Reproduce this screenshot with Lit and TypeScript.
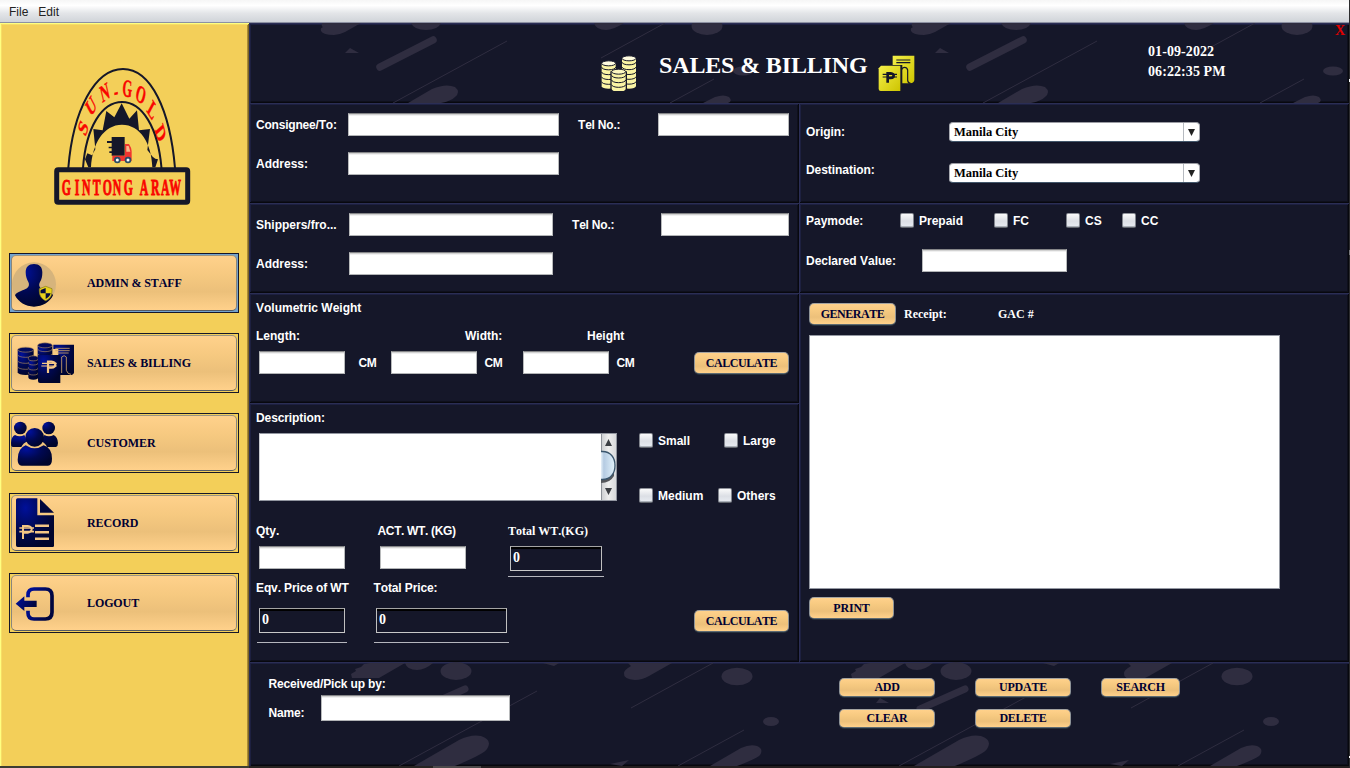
import { LitElement, html, css, svg } from "lit";
import { customElement } from "lit/decorators.js";

/* A pile of coins: one cylinder, a curved seam under every coin, and the top face. */
const stack = (x: number, y: number, rx: number, count: number, step: number, seam: string, face: string) => svg`
  <path d="M${x - rx} ${y}v${count * step - 4}a${rx} 8 0 0 0 ${rx * 2} 0v-${count * step - 4}z"/>
  ${Array.from({ length: count - 1 }, (_, i) => svg`
    <path fill="none" stroke=${seam} d="M${x - rx} ${y + (i + 1) * step - 3}a${rx} 8 0 0 0 ${rx * 2} 0"/>`)}
  <ellipse cx=${x} cy=${y} rx=${rx} ry="7.500" fill=${face} stroke=${seam}/>`;

const navGradient = svg`
  <defs>
    <radialGradient id="ink" cx="0.25" cy="0.2" r="0.85">
      <stop offset="0" stop-color="#00109a"/>
      <stop offset="0.55" stop-color="#000850"/>
      <stop offset="1" stop-color="#00052c"/>
    </radialGradient>
    <linearGradient id="inkLine" x1="0" y1="0" x2="1" y2="0.4">
      <stop offset="0" stop-color="#0010a0"/>
      <stop offset="1" stop-color="#00063e"/>
    </linearGradient>
  </defs>`;

const adminIcon = html`<svg class="nav-icon" viewBox="36 49 180 162">
  ${navGradient}
  <circle cx="102" cy="134" r="66" fill="#d6b47c"/>
  <path fill="url(#ink)" d="M102 73c-16 0-25 9-25 25 0 13 4 22 8 29 3 5 3 14-4 19-6 4-12 5-18 8-10 4-16 7-18 13 10 20 32 34 57 34s48-14 57-34c-2-6-8-9-18-13-6-3-12-4-18-8-7-5-6-14-3-19 5-7 7-16 7-29 0-16-9-25-25-25z"/>
  <path fill="#e8d21c" stroke="#857a1c" stroke-width="2" d="M137 140l19 7c1 20-5 30-19 36-14-6-20-16-19-36z"/>
  <path fill="#050b3c" d="M137 145v16h-15c-1-4-1-7 0-10zM137 161h15c-2 8-7 13-15 17z"/>
</svg>`;

const salesIcon = html`<svg class="nav-icon" viewBox="36 289 180 162">
  ${navGradient}
  <path fill="url(#ink)" d="M160 315h62v84q-2 7-12 7h-35v-78h-15z"/>
  <path fill="none" stroke="#d0a568" stroke-width="2.500" d="M166 326h43M166 333h43M172 340h34M185 400v-48q8-8 14 0v40q4 12 14 12"/>
  <g fill="url(#ink)" stroke-width="1.800">
    ${stack(77, 330, 24, 4, 18, "#b8925e", "#000a5c")}
    ${stack(100, 356, 15, 4, 15, "#b8925e", "#000850")}
    ${stack(135, 317, 22, 3, 14, "#b8925e", "#00085a")}
  </g>
  <path fill="url(#ink)" d="M114 346h67v84h-61q-6 0-6-6z"/>
  <path fill="none" stroke="#f5c886" stroke-width="6.500" d="M144 400v-34h10q12 1 12 9t-12 9h-10"/>
  <path stroke="#f5c886" stroke-width="3.500" d="M126 371h44M124 379h46"/>
</svg>`;

const customerIcon = html`<svg class="nav-icon" viewBox="36 529 180 162">
  ${navGradient}
  <g fill="url(#ink)">
    <circle cx="61" cy="565" r="19"/><circle cx="146" cy="565" r="19"/>
    <path d="M45 586q14 8 28 0 3 10 11 18-15 6-20 18H38q-6-3-5-12 1-20 12-24zM133 586q14 8 28 0 12 6 13 24 0 9-6 12h-27q-4-11-18-18 8-8 10-18z"/>
    <circle cx="104" cy="593" r="28"/>
    <path d="M77 617q27 18 54 0 25 8 25 40 0 20-12 21H65q-12-1-12-18 0-34 24-43z"/>
  </g>
</svg>`;

const recordIcon = html`<svg class="nav-icon" viewBox="36 78 180 162">
  ${navGradient}
  <path fill="url(#ink)" d="M53 85h59v51h50v91q0 4-4 4H53q-5 0-5-5V90q0-5 5-5z"/>
  <path fill="#00063c" d="M120 87l42 41h-42z"/>
  <path stroke="#f3c684" stroke-width="7.500" d="M105 167h42M105 187h42M105 206h42"/>
  <path fill="none" stroke="#f3c684" stroke-width="6" d="M69 207v-39h14q12 2 12 10t-12 10H69"/>
  <path stroke="#f3c684" stroke-width="5" d="M58 174h44M58 185h44"/>
</svg>`;

const logoutIcon = html`<svg class="nav-icon" viewBox="36 318 180 162">
  ${navGradient}
  <path fill="none" stroke="url(#inkLine)" stroke-width="11" d="M84 382v-7q0-18 18-18h34q20 0 20 20v50q0 20-20 20h-34q-18 0-18-18v-7"/>
  <path fill="url(#inkLine)" d="M47 401l26-22v13h37v19H73v12z"/>
</svg>`;

const NAV = [
  { label: "ADMIN & STAFF", icon: adminIcon, focused: true },
  { label: "SALES & BILLING", icon: salesIcon, focused: false },
  { label: "CUSTOMER", icon: customerIcon, focused: false },
  { label: "RECORD", icon: recordIcon, focused: false },
  { label: "LOGOUT", icon: logoutIcon, focused: false },
];

const ARC_LETTERS: [string, number, number, number][] = [
  ["S", 83, 128, -61],
  ["U", 91, 106, -42],
  ["N", 104.7, 92.5, -22],
  ["-", 116, 91, -8],
  ["G", 127.3, 88.5, 6],
  ["O", 141, 94.5, 24],
  ["L", 152.5, 110, 43],
  ["D", 160.7, 133, 63],
];
const BANNER_X = [185, 224, 246, 278, 308, 338, 371, 400, 419, 453, 483, 508];

const logo = html`<svg class="logo" viewBox="54 66 137 140">
  <path d="M68.300 168C73 110 95 69 123 69s47 41 52 99" fill="none" stroke="#151729" stroke-width="2"/>
  <path d="M83 168C86 127 102 102 122 102s36 25 39.500 66" fill="none" stroke="#151729" stroke-width="2"/>
  <g transform="scale(.33333)">
    <path fill="#151729" d="M273 502H265L255 478L262 460L276 466L286 448L280 387L308 391L319 333L343 352L365 310L388 356L411 331L417 391L450 387L442 450L458 470L466 476L474 478L466 502H457C455 430 420 374 366 374S277 430 273 502z"/>
    <path fill="#151729" d="M335 411h39v56h-39v-8h-7v-5h7v-9h-9v-5h9v-11h-14v-6h14z"/>
    <path fill="#f0352f" d="M337 467h38v-35h12q8 12 8 22v29h-58z"/>
    <path fill="#f6b98a" d="M379 438h7l5 17h-12z"/>
    <circle cx="352" cy="480" r="10" fill="#2c4c66"/><circle cx="384" cy="480" r="10" fill="#2c4c66"/>
    <circle cx="352" cy="480" r="4.500" fill="#fff"/><circle cx="384" cy="480" r="4.500" fill="#fff"/>
  </g>
  <rect x="56.700" y="169.700" width="131" height="32.500" rx="1.500" fill="none" stroke="#151729" stroke-width="5"/>
  <g transform="scale(1 1.75)" class="logo-text" font-size="14" stroke-width=".25">
    ${ARC_LETTERS.map(([ch, x, y, r]) => svg`
      <text transform="translate(${x} ${y / 1.75}) rotate(${r}) scale(.9 1)" y="4.700" text-anchor="middle">${ch}</text>`)}
  </g>
  <g transform="scale(.5 1)" class="logo-text" font-size="23.500" stroke-width=".9">
    <text y="195" x=${BANNER_X.map((x) => (x / 3) * 2).join(" ")}>GINTONG ARAW</text>
  </g>
</svg>`;

const headerTile = (dx: number) => svg`<g transform="translate(${dx} 0)">
  <path d="M322 23q-1 3 1 4-3 1-2 4 2 4 13 4 5 0 11-3l16-9z"/>
  <path d="M411 23q3 7 15 7t15-7z"/>
  <path d="M350 48l9 5h-14z"/>
  <path d="M380 67L433 40" stroke-width="7.500" stroke-linecap="round"/>
  <path d="M393 103L507 41" stroke-width="1"/>
  <path d="M408 103l24-14q14-6 23-2 6 5 0 10-4 4-14 6z"/>
  <path d="M594 23q2 7 12 7 7 0 18-7z"/>
  <path d="M601 58L665 23" stroke-width="1"/>
  <ellipse cx="707" cy="26" rx="15.500" ry="9"/>
  <ellipse cx="743" cy="71" rx="10" ry="4.500"/>
  <path d="M670 103L714 79" stroke-width="1"/>
  <path d="M703 103l12-6q9-3 14 0 4 4-1 6z"/>
</g>`;

const footerTile = (dx: number) => svg`<g transform="translate(${dx} 0)">
  <path d="M852 678l-1-4 5-3-1-2 6-2 3-3 6-1h35l-26 15z"/>
  <path d="M905 663q2 7 12 7 8 0 16-7z"/>
  <ellipse cx="956" cy="671" rx="15.500" ry="9"/>
  <path d="M920 709L965 689" stroke-width="7" stroke-linecap="round"/>
  <path d="M880 698l9 5h-13z"/>
  <path d="M899 766L1037 691" stroke-width="1"/>
  <path d="M914 766l45-26q12-6 22-4 12 4 6 13-3 5-32 17z"/>
  <path d="M1043 663h16l-5 3z"/>
  <path d="M1124 673q-1 6 11 7 7 0 14-4l23-13h-44l3 3q-7 4-7 7z"/>
  <path d="M1131 708L1213 663" stroke-width="1"/>
  <ellipse cx="1237" cy="676.500" rx="15.500" ry="8.700"/>
  <ellipse cx="1271" cy="721.500" rx="8" ry="4.500"/>
  <path d="M1178 766L1244 730" stroke-width="1"/>
  <path d="M1210 766l31-18q9-4 16-2 7 3 3 9-2 3-23 11z"/>
  <path d="M1110 764l19-4-7 6z"/>
</g>`;

const coinsIcon = html`<svg class="coins" viewBox="34 107 108 108">
  <g fill="#faf4a4" stroke-width="3">
    ${stack(57, 132, 21, 5, 14.500, "#151729", "#fffce0")}
    ${stack(118, 117, 21, 6, 14.500, "#151729", "#fffce0")}
    <path fill="#151729" d="M62 156h50v60H62z"/>
    ${stack(87, 157, 21, 4, 14, "#151729", "#fdf8c0")}
  </g>
</svg>`;

const billIcon = html`<svg class="bill" viewBox="863 104 111 111">
  <defs><linearGradient id="gold" x1="0" y1="0" x2="1" y2="1">
    <stop offset="0" stop-color="#f5f04a"/><stop offset="1" stop-color="#cdc400"/>
  </linearGradient></defs>
  <path fill="url(#gold)" d="M907 106h65v74q-2 9-12 9h-24v-55h-29z"/>
  <path fill="none" stroke="#151729" stroke-width="3.500" d="M918 119h42M918 127h42M933 190v-41q3-8 10-8t9 8v31q1 9 9 9"/>
  <path fill="url(#gold)" d="M872 136h58v76h-59q-6 0-6-6v-62z"/>
  <path fill="none" stroke="#151729" stroke-width="8" d="M892 187v-28h9q9 1 9 7t-9 7h-9"/>
  <path stroke="#151729" stroke-width="3.500" d="M877 162h43M877 170h43"/>
</svg>`;

const field = (value = "") => html`<input class="field ${value ? "computed" : ""}" .value=${value} />`;
const check = (label: string) => html`<label class="check"><i></i><span>${label}</span></label>`;
const combo = (value: string) => html`<div class="combo"><span>${value}</span><i>
  <svg width="7" height="7" viewBox="0 0 7 7"><path d="M0 0h7L3.500 7z" fill="#222"/></svg></i></div>`;

@customElement("app-root")
export class AppRoot extends LitElement {
  static styles = css`
    :host {
      display: grid;
      grid-template: 23px 743px 2px / 1349px 1px;
      width: 1350px;
      height: 768px;
      overflow: hidden;
      font: bold 12px/14px "Liberation Sans", Arial, sans-serif;
      font-kerning: none;
      color: #fff;
      background: #151729;
    }
    * { box-sizing: border-box; }
    .menubar {
      display: flex;
      align-items: center;
      gap: 10px;
      padding: 1px 0 0 9px;
      background: linear-gradient(#f6f6f6, #fff 25%, #e3e5e8 60%, #d0d4d9);
      border-bottom: 1px solid #8d91a2;
      color: #222;
      font-weight: normal;
    }
    .edge-right { grid-row: 1 / 4; grid-column: 2; background: linear-gradient(#2c2c2e 0 79px, #fff 79px 82px, #2c2c2e 82px 250px, #77787c 250px 255px, #2c2c2e 255px 756px, #fff 756px 758px, #2c2c2e 758px); }
    .edge-bottom { background: linear-gradient(90deg, #3d3d33 0 249px, #272422 249px 433px, #4d4a4b 433px 481px, #241f20 481px); }
    .body { display: grid; grid-template-columns: 249px 1100px; }

    .sidebar {
      display: flex;
      flex-direction: column;
      align-items: flex-start;
      gap: 20px;
      padding: 43px 0 0 9px;
      background: #f3cf59;
      box-shadow: inset 1px 1px #ffff80, inset -1px 0 #7c6421, inset 2px 2px #f6dd66, inset -2px 0 #a98b38;
    }
    .logo { width: 137px; height: 140px; margin: 0 0 27px 45px; }
    .logo-text { font-family: "Liberation Serif", serif; font-weight: bold; fill: #f90500; stroke: #f90500; }
    .nav { width: 230px; height: 60px; padding: 1px; border: 1px solid #151729; }
    .nav.focused { background: #73a3cd; }
    .nav button {
      display: flex;
      align-items: center;
      width: 100%;
      height: 100%;
      padding: 0;
      border: 1px solid;
      border-color: #9a9483 #8a867b #555b63;
      border-radius: 5px;
      background: linear-gradient(#ffd18b, #f6c980 35%, #ecc07a 66%, #ffd18b);
      color: #000033;
      font: bold 12px/14px "Liberation Serif", "Times New Roman", serif;
      font-kerning: none;
      letter-spacing: -.1px;
    }
    .nav-icon { width: 60px; height: 54px; margin-right: 15px; overflow: visible; flex: none; }

    .main { display: grid; grid-template: 80px 559px 104px / 550px 550px; }
    .panel {
      background: #151729;
      box-shadow: inset 1px 1px #2b2e55, inset -1px -1px #07080e, inset 2px 2px #1d2040, inset -2px -2px #0e0f1b;
    }
    .header, .footer { grid-column: 1 / 3; position: relative; display: flex; }
    .texture { inset: 0; width: 100%; height: 100%; fill: #2f2d40; stroke: #2f2d40; stroke-width: 0; box-shadow: inset 1px 1px #2b2e55, inset 2px 2px #1d2040; }
    .header > *, .footer > * { position: relative; }
    .header > .texture, .footer > .texture { position: absolute; }
    .serif { font-family: "Liberation Serif", "Times New Roman", serif; }
    .coins { width: 36px; height: 36px; margin: 32px 0 0 352px; }
    .title { margin: 28px 0 0 22px; width: 219px; white-space: nowrap; font-size: 24px; line-height: 28px; letter-spacing: -.15px; }
    .bill { width: 37px; height: 37px; margin-top: 32px; }
    .clock { margin: 19px 0 0 233px; width: 187px; font-size: 14px; line-height: 20px; letter-spacing: .08px; }
    .close { color: #e00000; font-size: 14px; line-height: 16px; }

    .left { display: grid; grid-template-rows: 100px 90px 110px 259px; }
    .right { display: grid; grid-template-rows: 100px 90px 369px; }
    .left > .panel, .right > .panel { padding: 10px 10px 0 7px; min-width: 0; }
    .grid { display: grid; align-items: center; justify-content: start; white-space: nowrap; }
    .field {
      display: block;
      width: 100%;
      height: 23px;
      border: 1px solid;
      border-color: #858688 #b8babb #b2b4b6;
      border-radius: 0;
      background: linear-gradient(#d2d2d2 0 1px, #f0f0f0 1px 2px, #fff 2px);
      outline: none;
    }
    .field.computed {
      height: 25px;
      padding: 0 2px 1px;
      border-color: #a4a4a4 #c0c0c0 #c8c8c8;
      background: linear-gradient(#000 0 2px, #151729 2px);
      color: #fff;
      font: bold 14px/18px "Liberation Serif", serif;
    }
    .party { grid-template-rows: 23px 23px; row-gap: 16px; }
    .consignee { grid-template-columns: 92px 211px 99px 131px; }
    .consignee > :first-child { letter-spacing: -.2px; }
    .shipper { grid-template-columns: 93px 204px 108px 128px; }
    .inset { margin-left: 19px; letter-spacing: -.2px; }

    .volume-title { line-height: 11px; }
    .volume-labels { grid-template-columns: 209px 122px 100px; margin-top: 15px; }
    .volume-fields { grid-template-columns: 86px 13px 33px 86px 7px 39px 86px 7px 78px 95px; padding-left: 3px; margin-top: 8px; }
    .volume-fields > :nth-child(2), .volume-fields > :nth-child(4), .volume-fields > :nth-child(6) { grid-column-end: span 2; letter-spacing: -.3px; }
    .volume-fields .a { padding-left: 13.500px; }
    .volume-fields .b { padding-left: 7.500px; }

    .btn {
      width: 100%;
      height: 22px;
      padding: 0;
      border: 1px solid;
      border-color: #a4a3a0 #8f9498 #5d6a72;
      border-radius: 5px;
      background: linear-gradient(#ffd18b, #f6c980 35%, #ecc07a 66%, #ffd18b);
      color: #000033;
      font: bold 12px/14px "Liberation Serif", "Times New Roman", serif;
      font-kerning: none;
      letter-spacing: -.45px;
      box-shadow: 0 1px #25303c;
    }

    .desc-title { line-height: 11px; letter-spacing: -.1px; }
    .desc { grid-template-columns: 358px 22px auto; padding-left: 3px; margin-top: 9px; align-items: start; }
    .area { display: flex; justify-content: flex-end; height: 68px; background: #fff; border: 1px solid #9296a0; border-left-color: #c9cbd0; }
    .scroll { width: 15px; height: 66px; }
    .sizes { grid-column: 3; display: grid; grid-template-rows: 15px 15px; row-gap: 40px; }
    .size-row { display: flex; }
    .check { display: flex; align-items: center; height: 15px; white-space: nowrap; }
    .check i {
      width: 14px;
      height: 15px;
      margin-right: 5px;
      border: 1px solid;
      border-color: #8f929a #82868e #61656d;
      border-radius: 2px;
      background: linear-gradient(#fafafa, #dcdfe5 55%, #e8ecf2);
      box-shadow: inset 0 -1px #aab0b8;
      flex: none;
    }
    .w85 { width: 85px; }
    .w79 { width: 79px; }

    .weights-labels { grid-template-columns: 121.500px 130.500px auto; margin-top: 21px; }
    .weights-labels > :nth-child(2) { letter-spacing: -.35px; }
    .weights { grid-template-columns: 86px 86px 96px; column-gap: 35px; padding-left: 3px; margin-top: 8px; align-items: start; height: 31px; }
    .weights > :nth-child(3) { margin-left: 7px; }
    .underlined { display: block; padding: 0 2px 5px; border-bottom: 1px solid #b5b6bd; }
    .weights .underlined { width: 96px; }
    .prices-labels { grid-template-columns: 117.500px auto; margin-top: 4px; letter-spacing: -.12px; }
    .prices { grid-template-columns: 90px 135px 95px; column-gap: 27px; padding-left: 1px; margin-top: 13px; align-items: start; }
    .prices .underlined { padding-bottom: 9px; }
    .prices > .btn { margin: 2px 0 0 158px; }

    .route { grid-template-columns: 143px 251px; row-gap: 21px; padding-top: 9px; letter-spacing: -.05px; }
    .combo { display: flex; justify-content: space-between; height: 20px; padding-left: 4px; background: #fff; border-radius: 4px; border: 1px solid; border-color: #9b9ca3 #a8abb2 #42566a; color: #000; font: bold 12.500px/18px "Liberation Serif", serif; letter-spacing: 0; }
    .combo i { display: grid; place-items: center; width: 16px; border-left: 1px solid #b6bac0; }
    .route > span { margin-top: -1px; }
    .route > :nth-child(3) { margin-top: -6px; }

    .pay { display: flex; align-items: center; height: 15px; }
    .pay > span { width: 94px; }
    .pay .p1 { width: 94px; } .pay .p2 { width: 72px; } .pay .p3 { width: 56px; }
    .declared { grid-template-columns: 116px 145px; margin-top: 21px; }
    .receipt-head { grid-template-columns: 87px 8px 94px auto; padding-left: 3px; }
    .receipt { width: 471px; height: 254px; margin: 10px 0 8px 3px; background: #fff; border: 1px solid #9599a3; }
    .print { width: 85px; margin-left: 3px; letter-spacing: -.2px; }

    .pickup { width: 590px; padding: 15px 0 0 19.500px; letter-spacing: -.15px; }
    .name-row { display: grid; grid-template-columns: 52.500px 189px; margin-top: 4px; align-items: center; }
    .name-row .field { height: 26px; }
    .name-row span { padding-top: 11px; height: 26px; }
    .actions { display: grid; grid-template-columns: 96px 96px 79px; grid-template-rows: 19px 19px; column-gap: 40px; row-gap: 12px; padding-top: 16px; align-content: start; }
    .actions .btn { height: 19px; line-height: 12px; padding-bottom: 2px; letter-spacing: -.25px; }
    .actions .search { margin-left: -10px; width: 79px; }
  `;

  private sidebar() {
    return html`<nav class="sidebar">
      ${logo}
      ${NAV.map((n) => html`<div class="nav ${n.focused ? "focused" : ""}"><button>${n.icon}${n.label}</button></div>`)}
    </nav>`;
  }

  private header() {
    return html`<header class="panel header">
      <svg class="texture" viewBox="249 23 1100 80">${headerTile(0)}${headerTile(590)}</svg>
      ${coinsIcon}
      <div class="title serif">SALES &amp; BILLING</div>
      ${billIcon}
      <div class="clock serif">01-09-2022<br />06:22:35 PM</div>
      <div class="close serif">X</div>
    </header>`;
  }

  private leftColumn() {
    return html`<div class="left">
      <section class="panel"><div class="grid party consignee">
        <span>Consignee/To:</span>${field()}<span class="inset">Tel No.:</span>${field()}
        <span>Address:</span>${field()}
      </div></section>
      <section class="panel"><div class="grid party shipper">
        <span>Shippers/fro...</span>${field()}<span class="inset">Tel No.:</span>${field()}
        <span>Address:</span>${field()}
      </div></section>
      <section class="panel">
        <div class="volume-title">Volumetric Weight</div>
        <div class="grid volume-labels"><span>Length:</span><span>Width:</span><span>Height</span></div>
        <div class="grid volume-fields">
          ${field()}<span class="a">CM</span>${field()}<span class="b">CM</span>${field()}<span class="b">CM</span>
          <button class="btn">CALCULATE</button>
        </div>
      </section>
      <section class="panel">
        <div class="desc-title">Description:</div>
        <div class="grid desc">
          <div class="area">
            <svg class="scroll" viewBox="0 0 15 66">
              <defs>
                <linearGradient id="track"><stop offset="0" stop-color="#c9cbce"/><stop offset=".5" stop-color="#eee"/><stop offset="1" stop-color="#d8d9db"/></linearGradient>
                <linearGradient id="thumb"><stop offset="0" stop-color="#e6f0f8"/><stop offset=".2" stop-color="#b5cbe2"/><stop offset="1" stop-color="#e2f2fb"/></linearGradient>
              </defs>
              <rect width="15" height="66" fill="url(#track)"/>
              <path d="M.5 0v66" stroke="#8e9299"/>
              <path d="M7.500 5l3.500 7h-7zM7.500 61l3.500-7h-7z" fill="#3c3f44"/>
              <path d="M0 46q9 0 13-8v4q-4 7-13 7z" fill="#55575b"/>
              <path d="M0 17.500h1.500c8 0 12.500 6 12.500 14s-4.500 14-12.500 14H0z" fill="url(#thumb)"/>
              <path d="M0 17.500h1.500c8 0 12.500 6 12.500 14s-4.500 14-12.500 14H0" fill="none" stroke="#3a556c" stroke-width="1.300"/>
            </svg>
          </div>
          <div class="sizes">
            <div class="size-row"><div class="w85">${check("Small")}</div>${check("Large")}</div>
            <div class="size-row"><div class="w79">${check("Medium")}</div>${check("Others")}</div>
          </div>
        </div>
        <div class="grid weights-labels"><span>Qty.</span><span>ACT. WT. (KG)</span><span class="serif">Total WT.(KG)</span></div>
        <div class="grid weights">${field()}${field()}<div class="underlined">${field("0")}</div></div>
        <div class="grid prices-labels"><span>Eqv. Price of WT</span><span>Total Price:</span></div>
        <div class="grid prices">
          <div class="underlined">${field("0")}</div><div class="underlined">${field("0")}</div>
          <button class="btn">CALCULATE</button>
        </div>
      </section>
    </div>`;
  }

  private rightColumn() {
    return html`<div class="right">
      <section class="panel"><div class="grid route">
        <span>Origin:</span>${combo("Manila City")}
        <span>Destination:</span>${combo("Manila City")}
      </div></section>
      <section class="panel">
        <div class="pay"><span>Paymode:</span>
          <div class="p1">${check("Prepaid")}</div><div class="p2">${check("FC")}</div><div class="p3">${check("CS")}</div>${check("CC")}
        </div>
        <div class="grid declared"><span>Declared Value:</span>${field()}</div>
      </section>
      <section class="panel">
        <div class="grid receipt-head serif">
          <button class="btn">GENERATE</button><i></i><span>Receipt:</span><span>GAC #</span>
        </div>
        <div class="receipt"></div>
        <button class="btn print">PRINT</button>
      </section>
    </div>`;
  }

  private footer() {
    return html`<footer class="panel footer">
      <svg class="texture" viewBox="249 662 1100 104">${footerTile(-500)}${footerTile(0)}</svg>
      <div class="pickup">
        <div>Received/Pick up by:</div>
        <div class="name-row"><span>Name:</span>${field()}</div>
      </div>
      <div class="actions">
        <button class="btn">ADD</button><button class="btn">UPDATE</button><button class="btn search">SEARCH</button>
        <button class="btn">CLEAR</button><button class="btn">DELETE</button>
      </div>
    </footer>`;
  }

  render() {
    return html`
      <div class="menubar"><span>File</span><span>Edit</span></div>
      <div class="edge-right"></div>
      <div class="body">
        ${this.sidebar()}
        <main class="main">${this.header()}${this.leftColumn()}${this.rightColumn()}${this.footer()}</main>
      </div>
      <div class="edge-bottom"></div>
    `;
  }
}
